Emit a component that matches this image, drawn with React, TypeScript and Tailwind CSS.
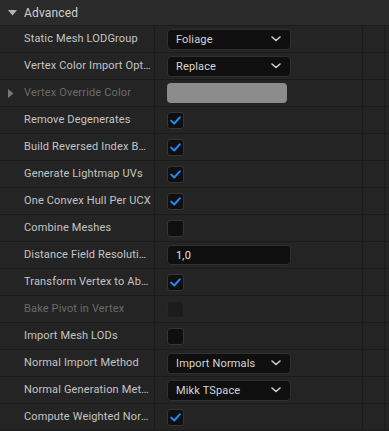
import React from 'react';

type Row = {
  label: string;
  kind: 'select' | 'check' | 'color' | 'number';
  value?: string;
  checked?: boolean;
  disabled?: boolean;
  expander?: boolean;
};

const ROWS: Row[] = [
  { label: 'Static Mesh LODGroup', kind: 'select', value: 'Foliage' },
  { label: 'Vertex Color Import Option', kind: 'select', value: 'Replace' },
  { label: 'Vertex Override Color', kind: 'color', disabled: true, expander: true },
  { label: 'Remove Degenerates', kind: 'check', checked: true },
  { label: 'Build Reversed Index Buffer', kind: 'check', checked: true },
  { label: 'Generate Lightmap UVs', kind: 'check', checked: true },
  { label: 'One Convex Hull Per UCX', kind: 'check', checked: true },
  { label: 'Combine Meshes', kind: 'check', checked: false },
  { label: 'Distance Field Resolution Scale', kind: 'number', value: '1,0' },
  { label: 'Transform Vertex to Absolute', kind: 'check', checked: true },
  { label: 'Bake Pivot in Vertex', kind: 'check', checked: false, disabled: true },
  { label: 'Import Mesh LODs', kind: 'check', checked: false },
  { label: 'Normal Import Method', kind: 'select', value: 'Import Normals' },
  { label: 'Normal Generation Method', kind: 'select', value: 'Mikk TSpace' },
  { label: 'Compute Weighted Normals', kind: 'check', checked: true },
];

const Chevron = () => (
  <svg width="10" height="6" viewBox="0 0 10 6" fill="none">
    <path d="M1 1l4 3.5L9 1" stroke="#d0d0d0" strokeWidth="1.6" strokeLinecap="round" strokeLinejoin="round" />
  </svg>
);

const Checkbox: React.FC<{ checked?: boolean; disabled?: boolean }> = ({ checked, disabled }) => (
  <div
    className={`w-[17px] h-[17px] rounded-[3px] border flex items-center justify-center ${
      disabled ? 'bg-[#1c1c1c] border-[#262626]' : 'bg-[#0f0f0f] border-[#353535]'
    }`}
  >
    {checked && (
      <svg width="11" height="9" viewBox="0 0 11 9" fill="none">
        <path d="M1.2 4.6l3 2.9L9.8 1.3" stroke="#1f8cf5" strokeWidth="2" strokeLinecap="round" strokeLinejoin="round" />
      </svg>
    )}
  </div>
);

const Value: React.FC<{ row: Row }> = ({ row }) => {
  if (row.kind === 'select') {
    return (
      <div className="w-[124px] h-[21px] rounded-[4px] bg-[#0f0f0f] border border-[#303030] flex items-center justify-between pl-[8px] pr-[9px] text-[#d6d6d6] leading-none">
        <span>{row.value}</span>
        <Chevron />
      </div>
    );
  }
  if (row.kind === 'number') {
    return (
      <div className="w-[124px] h-[20px] rounded-[4px] bg-[#0f0f0f] border border-[#303030] flex items-center pl-[8px] text-[#e0e0e0] leading-none">
        {row.value}
      </div>
    );
  }
  if (row.kind === 'color') {
    return <div className="w-[120px] h-[20px] rounded-[4px] bg-[#8c8c8c]" />;
  }
  return <Checkbox checked={row.checked} disabled={row.disabled} />;
};

export default function App() {
  return (
    <div
      className="w-[389px] h-[431px] overflow-hidden bg-[#1a1a1a] text-[11px] tracking-[0.15px] select-none"
      style={{ fontFamily: 'Roboto, "Noto Sans", sans-serif' }}
    >
      <div className="h-[26px] bg-[#2b2b2b] border-b border-[#1b1b1b] flex items-center pl-[8px] text-[#d0d0d0] text-[12px]">
        <svg width="9" height="6" viewBox="0 0 9 6" className="mr-[7px]">
          <path d="M0 0h9L4.5 5.5z" fill="#b4b4b4" />
        </svg>
        Advanced
      </div>
      {ROWS.map((row) => (
        <div key={row.label} className="h-[27px] flex border-b border-[#1b1b1b] bg-[#242424]">
          <div
            className={`w-[155px] shrink-0 flex items-center pl-[8px] pr-[2px] border-r border-[#1b1b1b] ${
              row.disabled ? 'text-[#6b6b6b]' : 'text-[#c4c4c4]'
            }`}
          >
            <div className="w-[16px] shrink-0">
              {row.expander && (
                <svg width="6" height="9" viewBox="0 0 6 9">
                  <path d="M0 0v9l5.5-4.5z" fill="#777777" />
                </svg>
              )}
            </div>
            <span className="truncate">{row.label}</span>
          </div>
          <div className="w-[208px] shrink-0 flex items-center pl-[12px] border-r border-[#1b1b1b]">
            <Value row={row} />
          </div>
          <div className="w-[22px] shrink-0 border-r border-[#1b1b1b]" />
        </div>
      ))}
    </div>
  );
}
